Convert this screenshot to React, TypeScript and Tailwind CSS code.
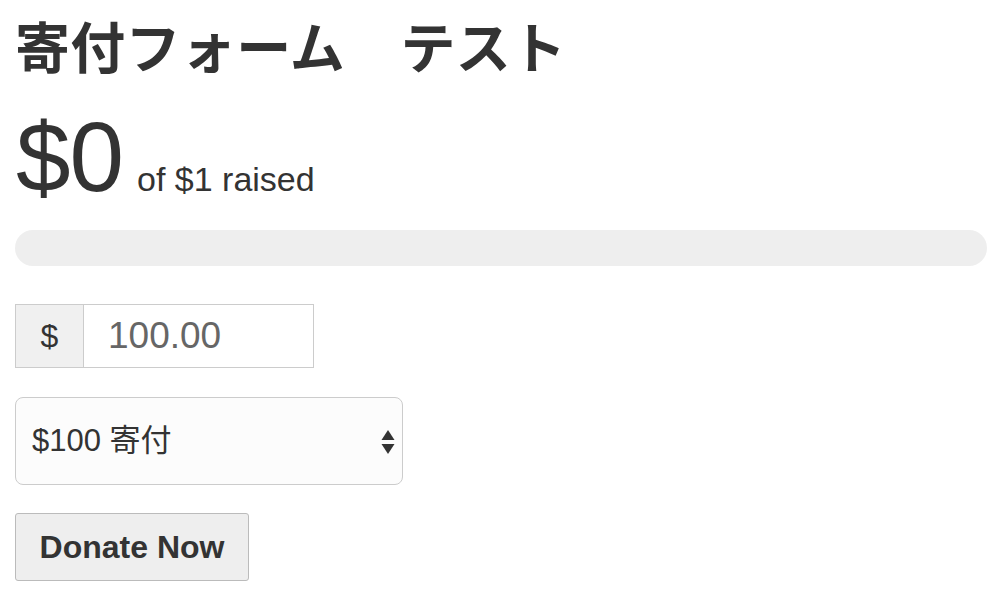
const sans = "font-['Liberation_Sans','Noto_Sans_CJK_JP',sans-serif]";

const DonationForm = () => {
  return (
    <div className={`min-h-screen bg-white pl-[15px] pr-[13px] pt-[17px] text-[#333] ${sans}`}>
      <h1 className="font-['Noto_Sans_CJK_JP',sans-serif] text-[55px] font-bold leading-none tracking-[0.3px]">
        寄付フォーム　テスト
      </h1>

      {/* Raised */}
      <div className="mt-[36px] flex items-baseline">
        <span className="pl-[1px] text-[98px] leading-none tracking-[-1px]">$0</span>
        <span className="ml-[14px] text-[34px] leading-none">of $1 raised</span>
      </div>

      {/* Progress */}
      <div className="mt-[24px] h-[36px] w-full rounded-full bg-[#eeeeee]" />

      {/* Amount */}
      <div className="mt-[38px] flex h-[64px] w-[299px] border border-[#cccccc]">
        <div className="flex w-[68px] items-center justify-center border-r border-[#cccccc] bg-[#f0f0f0] text-[32px]">
          $
        </div>
        <input
          readOnly
          value="100.00"
          className="min-w-0 flex-1 bg-white pl-[24px] text-[37px] text-[#666] outline-none"
        />
      </div>

      {/* Select */}
      <div className="relative mt-[29px] w-[388px]">
        <select className="h-[88px] w-full appearance-none rounded-[8px] border border-[#cccccc] bg-[#fcfcfc] pl-[16px] text-[31px] text-[#333] outline-none">
          <option>$100 寄付</option>
        </select>
        <svg
          className="pointer-events-none absolute right-[8px] top-[32px]"
          width="14"
          height="26"
          viewBox="0 0 14 26"
        >
          <path d="M7 1 L13.5 11 L0.5 11 Z" fill="#333" />
          <path d="M7 25 L13.5 15 L0.5 15 Z" fill="#333" />
        </svg>
      </div>

      {/* Submit */}
      <button className="mt-[28px] h-[68px] w-[234px] rounded-[3px] border border-[#bbbbbb] bg-[#eeeeee] text-[32px] font-bold text-[#333]">
        Donate Now
      </button>
    </div>
  );
};

export default function App() {
  return <DonationForm />;
}
